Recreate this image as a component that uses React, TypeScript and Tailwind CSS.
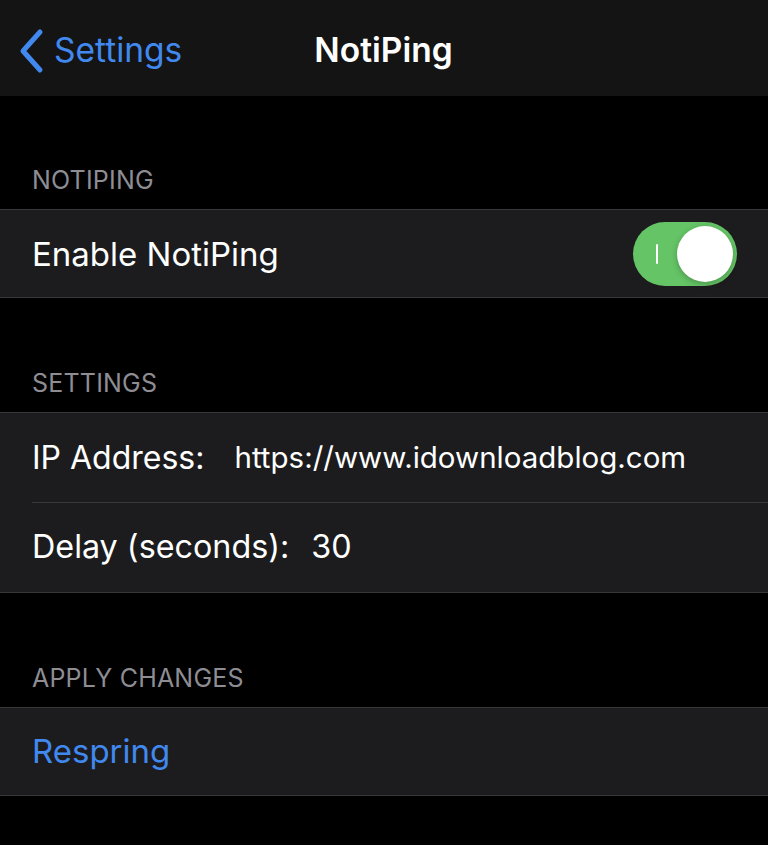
import React from "react";

const font = { fontFamily: "Inter, 'Noto Sans', sans-serif" };

function Header({ label, first }: { label: string; first?: boolean }) {
  return (
    <div
      className={`flex items-end px-[32px] pb-[14px] ${first ? "h-[113px]" : "h-[114px]"}`}
    >
      <span className="text-[25px] leading-[30px] tracking-[0.2px] text-[#8d8d93]">{label}</span>
    </div>
  );
}

export default function App() {
  return (
    <div className="w-[768px] h-[845px] bg-black overflow-hidden" style={font}>
      {/* Nav bar */}
      <div className="h-[96px] bg-[#141414] relative flex items-center pt-[5px]">
        <div className="flex items-center pl-[18px] gap-[10px]">
          <svg width="26" height="46" viewBox="0 0 26 46" fill="none">
            <path d="M22 4 L5 23 L22 42" stroke="#4189ef" strokeWidth="5" strokeLinecap="round" strokeLinejoin="round" />
          </svg>
          <span className="text-[33.5px] text-[#4189ef] leading-none">Settings</span>
        </div>
        <div className="absolute left-0 right-0 top-0 h-full flex items-center justify-center pt-[5px] pointer-events-none">
          <span className="text-[33.5px] font-semibold text-white leading-none pr-[1px]">NotiPing</span>
        </div>
      </div>

      <Header label="NOTIPING" first />
      <div className="bg-[#1c1c1e] border-y border-[#38383a] h-[89px] flex items-center justify-between px-[32px]">
        <span className="text-[33px] text-white pt-[2px]">Enable NotiPing</span>
        <div className="w-[104px] h-[64px] rounded-full bg-[#65c466] relative mr-[-1px]">
          <div className="absolute left-[23px] top-[22px] w-[2px] h-[20px] bg-white rounded-full" />
          <div className="absolute right-[4px] top-[4px] w-[56px] h-[56px] rounded-full bg-white shadow-[0_2px_6px_rgba(0,0,0,0.25)]" />
        </div>
      </div>

      <Header label="SETTINGS" />
      <div className="bg-[#1c1c1e] border-y border-[#38383a]">
        <div className="h-[89px] flex items-center pl-[32px]">
          <span className="text-[32px] text-white">IP Address:</span>
          <span className="text-[29.5px] text-white ml-[30px]">https://www.idownloadblog.com</span>
        </div>
        <div className="ml-[32px] h-px bg-[#38383a]" />
        <div className="h-[89px] flex items-center pl-[32px]">
          <span className="text-[32.3px] text-white">Delay (seconds):</span>
          <span className="text-[32.3px] text-white ml-[22px]">30</span>
        </div>
      </div>

      <Header label="APPLY CHANGES" />
      <div className="bg-[#1c1c1e] border-y border-[#38383a] h-[89px] flex items-center px-[32px]">
        <span className="text-[33px] text-[#4189ef]">Respring</span>
      </div>
    </div>
  );
}
